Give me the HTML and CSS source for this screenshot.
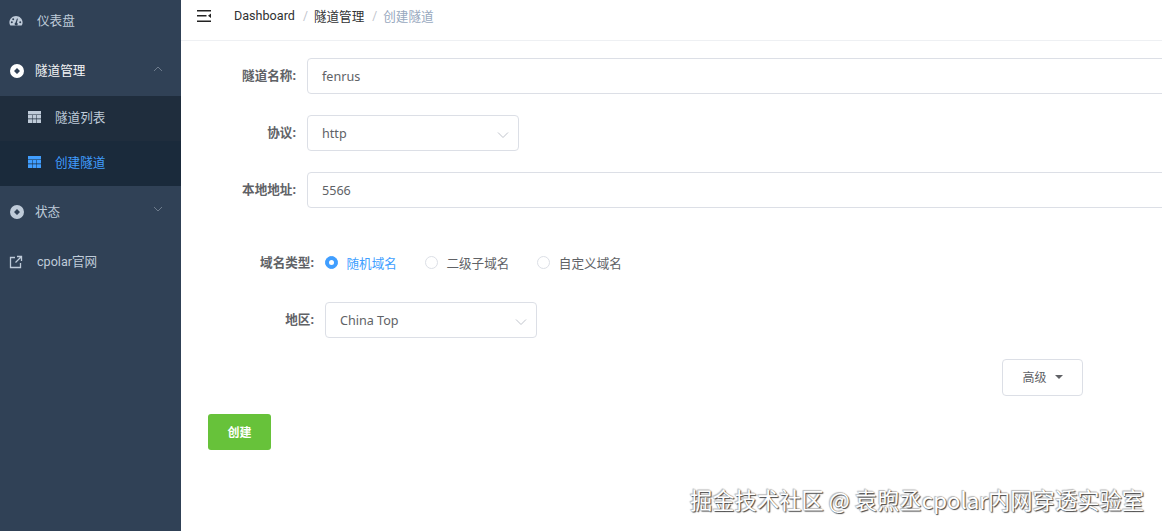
FILE: index.html
```html
<!DOCTYPE html>
<html lang="zh-CN">
<head>
<meta charset="utf-8">
<title>创建隧道</title>
<link rel="stylesheet" href="styles.css">
</head>
<body>
<div class="app">
  <aside class="sidebar">
    <div class="menu-item">
      <svg class="icon" viewBox="0 0 14 14"><path fill="#bfcbd9" d="M7 2C3.400 2 .4 4.900.4 8.400c0 1 .2 2 .8 2.900.1.2.3.3.5.3h10.600c.2 0 .4-.1.5-.3.600-.9.800-1.900.8-2.900C13.600 4.900 10.600 2 7 2zM2.800 9.200a1 1 0 1 1 0-2 1 1 0 0 1 0 2zm1.400-3a1 1 0 1 1 0-2 1 1 0 0 1 0 2zM7 11.200a1.300 1.300 0 0 1-.6-2.500L8 4.400l.9.300-1 4A1.300 1.300 0 0 1 7 11.200zm4.200-2a1 1 0 1 1 0-2 1 1 0 0 1 0 2z"/></svg>
      <span class="label">仪表盘</span>
    </div>
    <div class="menu-item open">
      <svg class="icon icon-lg" viewBox="0 0 14 14"><path fill="#fff" fill-rule="evenodd" d="M7 0a7 7 0 1 1 0 14A7 7 0 0 1 7 0zm0 4L4 7l3 3 3-3z"/></svg>
      <span class="label label-tight">隧道管理</span>
      <svg class="chev" viewBox="0 0 12 12"><path d="M2 8l4-4 4 4" fill="none" stroke="#6d7b8c" stroke-width="1"/></svg>
    </div>
    <div class="submenu">
      <div class="sub-item">
        <svg class="grid" viewBox="0 0 13 12"><path fill="#bfcbd9" d="M0 0h13v3.400H0zM0 4h4v3.600H0zM4.500 4h4v3.600h-4zM9 4h4v3.600H9zM0 8.200h4V12H0zM4.500 8.200h4V12h-4zM9 8.200h4V12H9z"/></svg>
        <span>隧道列表</span>
      </div>
      <div class="sub-item active">
        <svg class="grid" viewBox="0 0 13 12"><path fill="#409eff" d="M0 0h13v3.400H0zM0 4h4v3.600H0zM4.500 4h4v3.600h-4zM9 4h4v3.600H9zM0 8.200h4V12H0zM4.500 8.200h4V12h-4zM9 8.200h4V12H9z"/></svg>
        <span>创建隧道</span>
      </div>
    </div>
    <div class="menu-item">
      <svg class="icon icon-lg" viewBox="0 0 14 14"><path fill="#bfcbd9" fill-rule="evenodd" d="M7 0a7 7 0 1 1 0 14A7 7 0 0 1 7 0zm0 4L4 7l3 3 3-3z"/></svg>
      <span class="label label-tight">状态</span>
      <svg class="chev" viewBox="0 0 12 12"><path d="M2 4l4 4 4-4" fill="none" stroke="#6d7b8c" stroke-width="1"/></svg>
    </div>
    <div class="menu-item">
      <svg class="icon" viewBox="0 0 14 14"><path d="M6 2.500H1.500v10h10V8M8 1.500h4.500V6M12.500 1.500L6.500 7.500" fill="none" stroke="#bfcbd9" stroke-width="1.300"/></svg>
      <span class="label">cpolar官网</span>
    </div>
  </aside>

  <main class="main">
    <header class="navbar">
      <svg class="hamburger" viewBox="0 0 14 12"><path fill="#222" d="M0 0h14v1.600H0zM0 5h9.500v1.600H0zM0 10.400h14V12H0zM14 3.500v4.500l-3-2.250z"/></svg>
      <nav class="crumbs">
        <span>Dashboard</span><i>/</i><span>隧道管理</span><i>/</i><span class="muted">创建隧道</span>
      </nav>
    </header>

    <section class="content">
      <div class="group">
        <div class="row">
          <label class="field-label">隧道名称:</label>
          <div class="input wide">fenrus</div>
        </div>
        <div class="row">
          <label class="field-label">协议:</label>
          <div class="input select">http
            <svg class="caret" viewBox="0 0 12 12"><path d="M1 3.500l5 5 5-5" fill="none" stroke="#c0c4cc" stroke-width="1"/></svg>
          </div>
        </div>
        <div class="row">
          <label class="field-label">本地地址:</label>
          <div class="input wide">5566</div>
        </div>
      </div>

      <div class="group group-two">
        <div class="row radio-row">
          <label class="field-label">域名类型:</label>
          <div class="radios">
            <span class="radio checked"><b class="dot"></b>随机域名</span>
            <span class="radio"><b class="dot"></b>二级子域名</span>
            <span class="radio"><b class="dot"></b>自定义域名</span>
          </div>
        </div>
        <div class="row">
          <label class="field-label">地区:</label>
          <div class="input select">China Top
            <svg class="caret" viewBox="0 0 12 12"><path d="M1 3.500l5 5 5-5" fill="none" stroke="#c0c4cc" stroke-width="1"/></svg>
          </div>
        </div>
      </div>

      <div class="advanced-row">
        <button class="btn-advanced">高级<span class="tri"></span></button>
      </div>
      <button class="btn-create">创建</button>
    </section>
  </main>
</div>
<div class="watermark">掘金技术社区 @ 袁煦丞cpolar内网穿透实验室</div>
</body>
</html>
```

FILE: styles.css
```css
* { box-sizing: border-box; }
html, body { margin: 0; height: 100%; overflow: hidden; background: #fff; }
body { font-family: "Noto Sans", "Noto Sans CJK SC", sans-serif; font-size: 12.6px; color: #606266; }
.app { display: flex; height: 531px; width: 1162px; overflow: hidden; }

.sidebar { width: 181px; flex: none; background: #304156; color: #bfcbd9; display: flex; flex-direction: column; font-family: Roboto, "Noto Sans CJK SC", sans-serif; }
.menu-item { height: 50px; flex: none; display: flex; align-items: center; padding: 2px 0 0 9px; position: relative; }
.menu-item:first-child { margin-top: -6px; height: 52px; padding-top: 2px; }
.menu-item.open { color: #f4f4f5; padding-top: 0; }
.icon { width: 14px; height: 14px; flex: none; margin-right: 14px; }
.icon-lg { width: 14px; height: 14px; margin: 0 11px 0 1px; }
.label { line-height: 1; }
.chev { position: absolute; right: 17px; top: 17px; width: 12px; height: 12px; }
.submenu { background: #1f2d3d; flex: none; }
.sub-item { height: 45px; display: flex; align-items: center; padding: 0 0 4px 28px; }
.sub-item .grid { width: 13px; height: 12px; margin-right: 14px; flex: none; }
.sub-item.active { color: #409eff; background: #1a2a3b; }

.main { flex: 1; min-width: 0; overflow: hidden; }
.navbar { height: 41px; display: flex; align-items: center; padding: 0 0 9px 16px; border-bottom: 1px solid #eef0f3; }
.hamburger { width: 14px; height: 12px; flex: none; margin-right: 23px; }
.crumbs { color: #303133; display: flex; align-items: center; font-family: Roboto, "Noto Sans CJK SC", sans-serif; }
.crumbs i { font-style: normal; color: #c0c4cc; margin: 0 6px 0 8px; font-size: 12px; }
.crumbs .muted { color: #97a8be; }

.content { padding: 17px 0 0 27px; }
.group { display: flex; flex-direction: column; gap: 21px; }
.row { display: flex; align-items: center; gap: 11px; }
.field-label { width: 88px; padding-bottom: 3px; text-align: right; font-weight: 700; color: #606266; flex: none; font-size: 12.6px; white-space: nowrap; }
.input { height: 36px; border: 1px solid #dcdfe6; border-radius: 4px; padding: 0 14px; display: flex; align-items: center; position: relative; flex: none; background: #fff; }
.wide { width: 900px; }
.select { width: 212px; }
.caret { position: absolute; right: 9px; top: 13px; width: 12px; height: 12px; }

.group-two { margin-top: 34px; gap: 18px; }
.group-two .field-label { width: 106px; }
.radio-row { height: 42px; }
.radios { display: flex; gap: 28px; padding-bottom: 2px; }
.radio { display: inline-flex; align-items: center; gap: 8.5px; color: #606266; }
.dot { width: 13px; height: 13px; border-radius: 50%; border: 1px solid #dcdfe6; background: #fff; flex: none; }
.radio.checked { color: #409eff; }
.radio.checked .dot { border-color: #409eff; background: #409eff; position: relative; }
.radio.checked .dot::after { content: ""; position: absolute; left: 3px; top: 3px; width: 5px; height: 5px; background: #fff; border-radius: 50%; }

.advanced-row { display: flex; justify-content: flex-end; padding-right: 79px; margin-top: 21px; }
.btn-advanced { width: 81px; height: 37px; background: #fff; border: 1px solid #dcdfe6; border-radius: 4px; color: #606266; font: inherit; font-size: 12px; display: flex; align-items: center; justify-content: center; gap: 8px; padding: 0 0 2px; }
.tri { width: 0; height: 0; border-left: 4px solid transparent; border-right: 4px solid transparent; border-top: 4px solid #606266; }
.btn-create { display: block; margin-top: 18px; width: 63px; height: 36px; border: 0; border-radius: 3px; background: #67c23a; color: #fff; font: inherit; font-size: 12px; font-weight: 700; padding: 0; }

.watermark { position: absolute; left: 690px; top: 485px; font-size: 22.3px; line-height: 28px; color: #fff; text-shadow: 1px 1px 1px #444, -1px -1px 1px #bbb, 0 0 1px #666; white-space: nowrap; font-family: "Noto Sans CJK SC", sans-serif; }
```
